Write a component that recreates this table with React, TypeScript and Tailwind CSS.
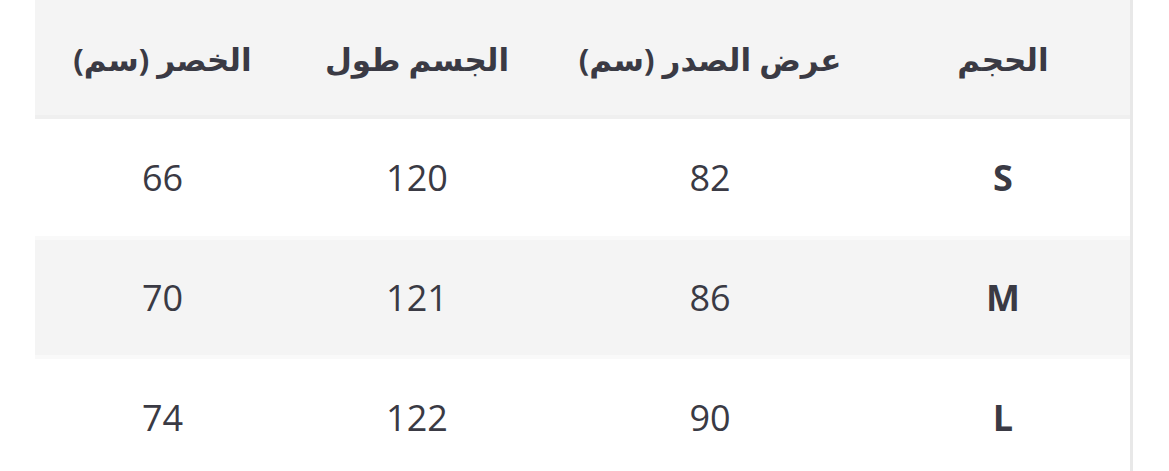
const rows = [
  { size: "S", chest: "82", length: "120", waist: "66" },
  { size: "M", chest: "86", length: "121", waist: "70" },
  { size: "L", chest: "90", length: "122", waist: "74" },
];

export default function App() {
  return (
    <div className="flex h-[471px] w-[1169px] overflow-hidden bg-white font-['Open_Sans','DejaVu_Sans',sans-serif] text-[#3a3a44]">
      <div className="w-[35px] shrink-0" />
      <table dir="rtl" className="w-[1095px] shrink-0 table-fixed border-collapse self-start">
        <colgroup>
          <col className="w-[254px]" />
          <col className="w-[332px]" />
          <col className="w-[254px]" />
          <col className="w-[255px]" />
        </colgroup>
        <thead>
          <tr className="h-[117px] border-b-4 border-[#efefef] bg-[#f4f4f4]">
            <th className="pt-[4px] text-center text-[31px] font-bold">الحجم</th>
            <th className="pt-[4px] text-center text-[31px] font-bold">عرض الصدر (سم)</th>
            <th className="pt-[4px] text-center text-[31px] font-bold">الجسم طول</th>
            <th className="pt-[4px] text-center text-[31px] font-bold">الخصر (سم)</th>
          </tr>
        </thead>
        <tbody>
          {rows.map((r, i) => (
            <tr
              key={r.size}
              className={
                i % 2 === 1
                  ? "h-[119px] border-y-4 border-[#f9f9f9] bg-[#f4f4f4]"
                  : i === 0
                    ? "h-[121px] bg-white"
                    : "h-[119px] bg-white"
              }
            >
              <td className="text-center text-[36px] font-bold">{r.size}</td>
              <td className="text-center text-[36px]">{r.chest}</td>
              <td className="text-center text-[36px]">{r.length}</td>
              <td className="text-center text-[36px]">{r.waist}</td>
            </tr>
          ))}
        </tbody>
      </table>
      <div className="h-[471px] w-[3px] shrink-0 bg-[#e8e8e8]" />
    </div>
  );
}
